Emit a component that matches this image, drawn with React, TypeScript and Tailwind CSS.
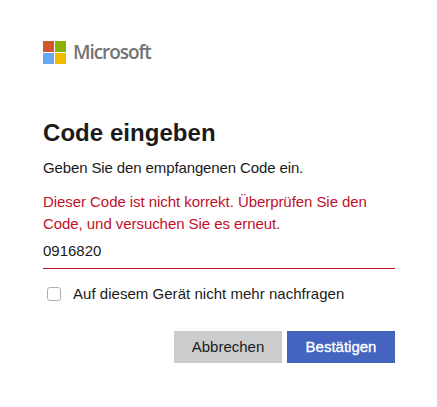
export default function App() {
  return (
    <div className="w-[437px] h-[407px] bg-white pt-[41px] pl-[43px] pr-[42px] font-['Liberation_Sans',sans-serif] text-[#1b1b1b]">
      <div className="flex items-center gap-[7px] h-[23px]">
        <svg width="23" height="23" viewBox="0 0 23 23" className="shrink-0">
          <rect x="0" y="0" width="11" height="11" fill="#d2562b" />
          <rect x="12" y="0" width="11" height="11" fill="#8cb000" />
          <rect x="0" y="12" width="11" height="11" fill="#68a8f2" />
          <rect x="12" y="12" width="11" height="11" fill="#efbb00" />
        </svg>
        <span className="text-[19px] font-semibold text-[#737373] tracking-[-1.05px] font-['Open_Sans',sans-serif]">Microsoft</span>
      </div>
      <h1 className="mt-[53px] text-[24px] leading-[32px] font-bold tracking-[0.05px]">Code eingeben</h1>
      <p className="mt-[9px] text-[15px] leading-[20px] tracking-[-0.12px]">Geben Sie den empfangenen Code ein.</p>
      <p className="mt-[13px] text-[15px] leading-[22px] tracking-[-0.06px] text-[#c00f2b]">Dieser Code ist nicht korrekt. Überprüfen Sie den Code, und versuchen Sie es erneut.</p>
      <div className="mt-[3px] h-[31px] border-b border-[#c8102e] text-[15px] leading-[26px]">0916820</div>
      <label className="mt-[13px] ml-[4px] flex items-center gap-[12px] h-[24px] text-[15px] tracking-[0.03px]">
        <span className="w-[14px] h-[14px] rounded-[3px] border border-[#b0b0b0] bg-white shrink-0" />
        Auf diesem Gerät nicht mehr nachfragen
      </label>
      <div className="mt-[25px] flex justify-end gap-[5px]">
        <button className="w-[108px] h-[32px] bg-[#cccccc] text-[15px] text-[#1b1b1b]">Abbrechen</button>
        <button className="w-[108px] h-[32px] bg-[#4464c0] text-[15px] text-white [-webkit-text-stroke:0.3px_white]">Bestätigen</button>
      </div>
    </div>
  );
}
